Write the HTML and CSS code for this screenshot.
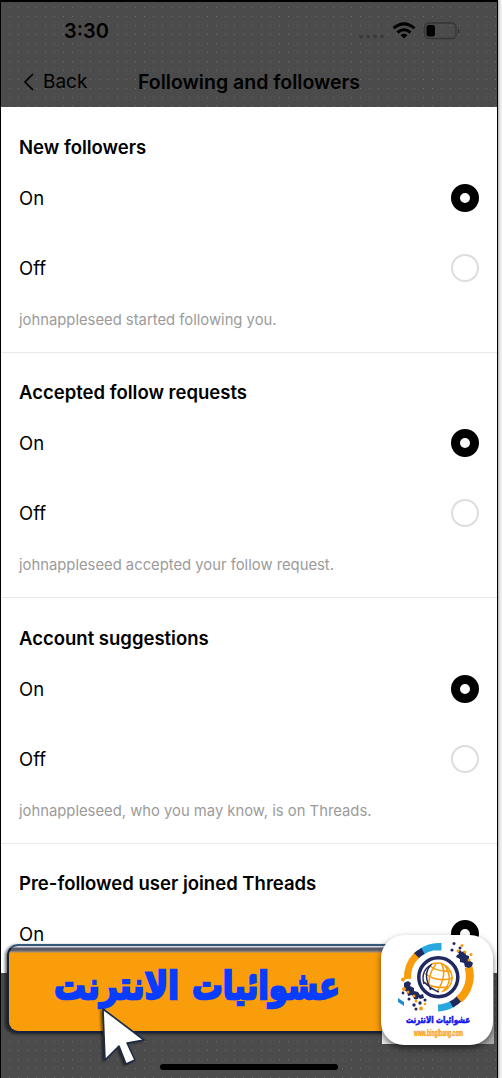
FILE: index.html
```html
<!DOCTYPE html>
<html lang="en">
<head>
<meta charset="utf-8">
<title>Following and followers</title>
<link rel="stylesheet" href="styles.css">
</head>
<body>
<div class="phone">
  <header class="top">
    <div class="status">
      <span class="time">3:30</span>
      <svg class="indicators" width="104" height="20" viewBox="0 0 104 20">
        <g fill="#3a3a3a"><circle cx="2" cy="14.500" r="2"/><circle cx="9" cy="14.500" r="2"/><circle cx="16" cy="14.500" r="2"/><circle cx="23" cy="14.500" r="2"/></g>
        <g fill="none" stroke="#000" stroke-width="3"><path d="M34.500 6.200Q45 -2.400 55.500 6.200"/><path d="M38.500 10.500Q45 4.900 51.500 10.500"/></g>
        <path d="M41.500 13Q45 10.300 48.500 13L45 16.600Z"/>
        <rect x="65.500" y="1" width="31.500" height="15.500" rx="4.500" fill="none" stroke="#363636" stroke-width="1.300"/>
        <rect x="67.500" y="3" width="8.500" height="11.400" rx="2.200"/>
        <path d="M99 6.500v5q2.600-2.500 0-5" fill="#303030"/>
      </svg>
    </div>
    <div class="nav">
      <svg width="12" height="18" viewBox="0 0 12 18"><path d="M10 1L2 9l8 8" fill="none" stroke="#000" stroke-width="1.700"/></svg>
      <span class="back">Back</span>
      <h1 class="title">Following and followers</h1>
    </div>
  </header>
  <main class="settings">
    <section class="group">
      <h2 class="heading">New followers</h2>
      <label class="row"><span>On</span><i class="radio on"></i></label>
      <label class="row"><span>Off</span><i class="radio"></i></label>
      <p class="note">johnappleseed started following you.</p>
    </section>
    <section class="group">
      <h2 class="heading">Accepted follow requests</h2>
      <label class="row"><span>On</span><i class="radio on"></i></label>
      <label class="row"><span>Off</span><i class="radio"></i></label>
      <p class="note">johnappleseed accepted your follow request.</p>
    </section>
    <section class="group">
      <h2 class="heading">Account suggestions</h2>
      <label class="row"><span>On</span><i class="radio on"></i></label>
      <label class="row"><span>Off</span><i class="radio"></i></label>
      <p class="note">johnappleseed, who you may know, is on Threads.</p>
    </section>
    <section class="group last">
      <h2 class="heading">Pre-followed user joined Threads</h2>
      <label class="row"><span>On</span><i class="radio on"></i></label>
    </section>
  </main>
  <footer class="bottom"><div class="home"></div></footer>
</div>

<div class="banner">
  <svg width="372" height="80" viewBox="0 0 372 80" direction="rtl">
    <g class="brand">
      <text x="331" y="53" textLength="148" lengthAdjust="spacingAndGlyphs">عشوائيات</text>
      <text x="170" y="53" textLength="125" lengthAdjust="spacingAndGlyphs">الانترنت</text>
    </g>
  </svg>
</div>

<div class="backing"></div>
<div class="logo">
  <svg width="112" height="110" viewBox="0 0 112 110">
    <g fill="none" stroke-width="7">
      <path d="M41 16.500A31 31 0 0 1 57 11.500V15.500" stroke="#29a8df"/>
      <path d="M35 21A31 31 0 0 1 42 16" stroke="#202860"/>
      <path d="M26.500 44A31 31 0 0 1 35.500 20.500" stroke="#f99c0c"/>
      <path d="M57 73A31 31 0 0 0 72 68.500" stroke="#29a8df"/>
      <path d="M70.500 69.500A31 31 0 0 0 79 63" stroke="#202860"/>
      <path d="M78 64.500A31 31 0 0 0 87.500 32" stroke="#f99c0c" stroke-width="8"/>
      <circle cx="57.300" cy="42.300" r="19.500" fill="#fff" stroke="#202860" stroke-width="3.500"/>
    </g>
    <g fill="none" stroke="#f99c0c" stroke-width="1.500">
      <path d="M51 29A14.800 14.800 0 0 1 63 56M60 28Q67 39 56 57M55 29Q45 42 49 55M64 31Q74 46 61 57M49 31Q57 37 69 36M43 38Q56 48 72 43M44 48Q54 54 67 52"/>
    </g>
    <path d="M43 49Q39 36 51 29M50 30Q41 39 50 55M43 47Q50 54 58 57" fill="none" stroke="#202860" stroke-width="1.400"/>
    <g fill="#202860">
      <path d="M76 16l3-1 2 2 3-1 1 4 3 1v4l4 3-1 3-3 2-4-1-1-4-4-1v-3l-4-2 1-2 2-1z"/>
      <path d="M23 48l4-2 3 2-1 3 4 2v3l4 1 2 3 3-1 1 4-4 1-2-2-4 1-2-3-4 1-1-4-3-2z"/>
      <circle cx="73" cy="8.500" r="1.500"/><circle cx="71" cy="15" r="1.600"/><circle cx="79" cy="13" r="1.500"/>
      <circle cx="81" cy="22" r="3"/><circle cx="35" cy="62" r="2.500"/><circle cx="28" cy="64" r="1.500"/>
      <circle cx="33" cy="70" r="1.700"/><circle cx="39" cy="68" r="1.700"/><circle cx="44" cy="65" r="1.500"/><circle cx="35" cy="74" r="1.500"/><circle cx="22" cy="58" r="1.400"/>
    </g>
    <g fill="#f99c0c">
      <circle cx="81" cy="10.500" r="1.500"/><circle cx="77" cy="16" r="1.500"/><circle cx="84" cy="17" r="1.500"/><circle cx="90" cy="19.500" r="1.500"/><circle cx="88" cy="25" r="1.500"/>
      <circle cx="22" cy="44.500" r="2"/><circle cx="23" cy="54" r="2"/><circle cx="27" cy="57" r="1.500"/><circle cx="33" cy="61" r="1.500"/><circle cx="40" cy="73.500" r="2"/><circle cx="44" cy="69" r="1.300"/><circle cx="35" cy="66" r="1.500"/>
    </g>
    <path d="M17 63l6 4v4l-6-4z" fill="#218bd2"/>
    <text class="logo-name" direction="rtl" x="89" y="88" textLength="64" lengthAdjust="spacingAndGlyphs">عشوائيات الانترنت</text>
    <g transform="translate(33 101) scale(.62 1)"><text class="logo-url" x="0" y="0" textLength="79" lengthAdjust="spacingAndGlyphs">www.binglbang.com</text></g>
  </svg>
</div>

<svg class="cursor" width="50" height="64" viewBox="0 0 50 64"><path d="M4 3L45 34 28 37 36 54 27 58 20 40 6 54Z" fill="#fff" stroke="#1b2b48" stroke-width="1.600" stroke-linejoin="round"/></svg>
</body>
</html>
```
FILE: styles.css
```css
* { box-sizing: border-box; }
body {
  margin: 0;
  width: 502px;
  height: 1078px;
  overflow: hidden;
  position: relative;
  background: #f0f0f0;
  font-family: Inter, "Liberation Sans", sans-serif;
  color: #000;
}
.phone {
  width: 498px;
  height: 1078px;
  display: flex;
  flex-direction: column;
  border: 1px solid #000;
  border-top-width: 2px;
  border-bottom: 0;
  background: #fff;
  box-shadow: 1px 0 2px #aaa;
}
.top, .bottom {
  background: radial-gradient(circle, #6c6c6c 0.6px, transparent 1px) 4px 1px / 9px 9px #4b4b4b;
}
.top { height: 105px; flex: none; }
.status {
  display: flex;
  justify-content: space-between;
  padding: 17px 34px 0 63px;
  height: 55px;
}
.time { font-size: 20px; line-height: 25px; font-weight: 600; }
.indicators { margin-top: 3px; }
.nav { display: flex; align-items: center; height: 49px; padding-left: 22px; }
.back { font-size: 19px; margin-left: 8px; width: 95px; }
.title { margin: 0; font-size: 19.5px; font-weight: 600; white-space: nowrap; }
.settings { height: 866px; flex: none; overflow: hidden; }
.group {
  height: 245.6px;
  padding: 26.7px 18px 0;
  border-bottom: 1px solid #e9e9e9;
}
.last { border: 0; }
.heading { margin: 0; height: 26px; line-height: 26px; font-size: 18.5px; font-weight: 600; white-space: nowrap; }
.row {
  display: flex;
  justify-content: space-between;
  align-items: center;
  height: 70px;
  padding-top: 6px;
  font-size: 18.5px;
}
.radio { width: 28px; height: 28px; border-radius: 50%; border: 2px solid #ddd; }
.radio.on { border: 9px solid #000; }
.note { margin: 8.9px 0 0; line-height: 22px; font-size: 14.8px; color: #9b9b9b; white-space: nowrap; }
.bottom { flex: 1; display: flex; justify-content: center; align-items: flex-end; padding-bottom: 8px; }
.home { width: 178px; height: 6px; border-radius: 3px; background: #000; }
.banner {
  position: absolute;
  left: 7px;
  top: 944px;
  width: 384px;
  height: 89px;
  border: 2px solid #142341;
  border-top-color: #385779;
  border-radius: 11px 0 0 11px;
  background: linear-gradient(#d5dce6 0 1px, #5b5966 2px 4px, #9c8f7e 6px, #fa9d0a 7px);
  box-shadow: -2px 1px 3px rgba(0,0,0,.55);
}
.brand text {
  font: bold 38px "DejaVu Sans", sans-serif;
  fill: #083cff;
  stroke: #083cff;
  stroke-width: 2.4px;
}
.backing {
  position: absolute;
  left: 382px;
  top: 973px;
  width: 112px;
  height: 71px;
  background: linear-gradient(90deg, #eee, #aaa);
}
.logo {
  position: absolute;
  left: 381px;
  top: 935px;
  width: 112px;
  height: 110px;
  border-radius: 23px;
  background: #fff;
  box-shadow: 0 3px 6px rgba(0,0,0,.55);
}
.logo-name { font: bold 9px "DejaVu Sans", sans-serif; fill: #1414ed; stroke: #1414ed; stroke-width: .6px; }
.logo-url { font: bold 8.5px "Liberation Sans", sans-serif; fill: #f99c0c; stroke: #f99c0c; stroke-width: .3px; }
.cursor { position: absolute; left: 99px; top: 1006px; filter: drop-shadow(-2px 1px 1px rgba(0,0,0,.5)); }
```
